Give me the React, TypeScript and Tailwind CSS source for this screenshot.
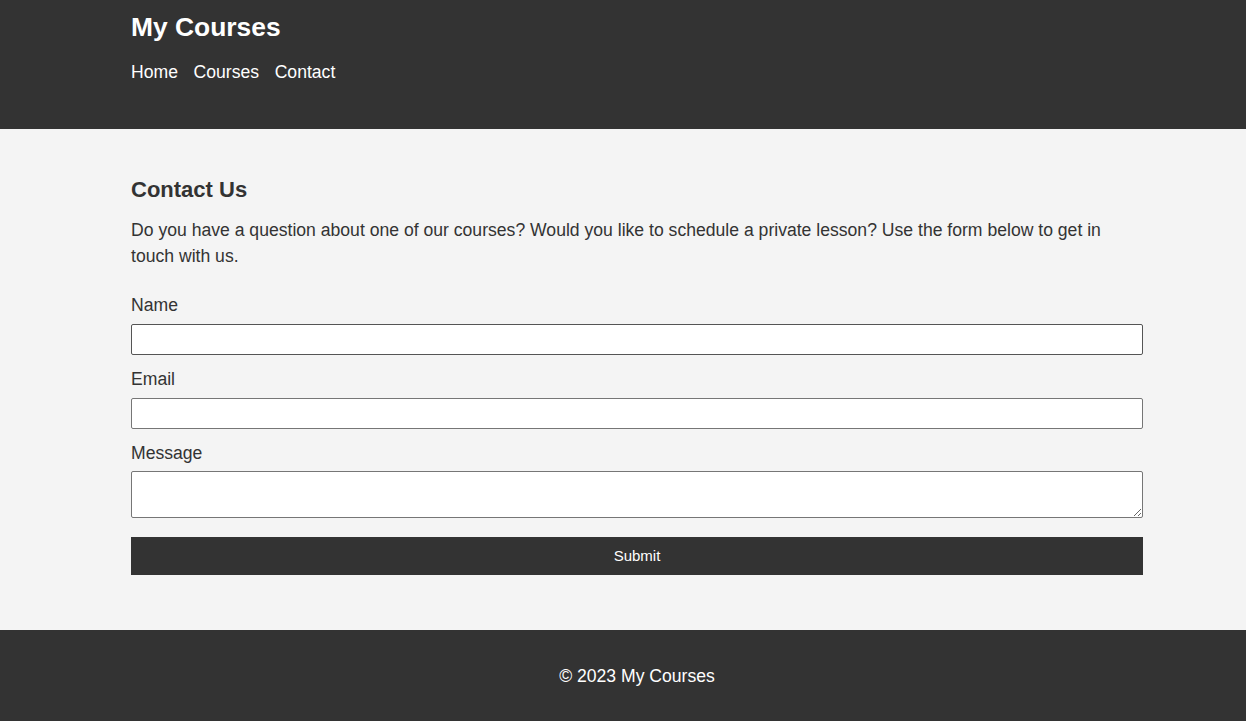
export default function App() {
  return (
    <div className="min-h-screen bg-[#f4f4f4] font-['Liberation_Sans',Arial,sans-serif] text-[17.6px] text-[#333]">
      <header className="h-[129px] bg-[#333] pt-[12px] text-white">
        <div className="ml-[131px] w-[1012px]">
          <h1 className="text-[26.4px] font-bold leading-[30px]">My Courses</h1>
          <nav className="mt-[20px] flex gap-[15.6px] leading-[20px]">
            <a href="#">Home</a>
            <a href="#">Courses</a>
            <a href="#">Contact</a>
          </nav>
        </div>
      </header>

      <main className="h-[501px] pt-[48px]">
        <div className="ml-[131px] w-[1012px]">
          <h2 className="text-[22px] font-bold leading-[26px]">Contact Us</h2>
          <p className="mt-[14px] leading-[26px]">
            Do you have a question about one of our courses? Would you like to schedule a private lesson? Use the form below to get in touch with us.
          </p>

          <form className="mt-[26px]">
            <label className="block leading-[20px]">Name</label>
            <input
              type="text"
              className="mt-[9px] block h-[31px] w-full rounded-[2px] border border-[#555] bg-white"
            />
            <label className="mt-[14px] block leading-[20px]">Email</label>
            <input
              type="email"
              className="mt-[9px] block h-[31px] w-full rounded-[2px] border border-[#767676] bg-white"
            />
            <label className="mt-[14px] block leading-[20px]">Message</label>
            <textarea className="mt-[8px] block h-[47px] w-full rounded-[2px] border border-[#767676] bg-white" />
            <button
              type="button"
              className="mt-[19px] block h-[38px] w-full bg-[#333] text-[15px] text-white"
            >
              Submit
            </button>
          </form>
        </div>
      </main>

      <footer className="bg-[#333] pb-[36px] pt-[36px] text-white">
        <p className="ml-[131px] w-[1012px] text-center leading-[20px]">&copy; 2023 My Courses</p>
      </footer>
    </div>
  );
}
